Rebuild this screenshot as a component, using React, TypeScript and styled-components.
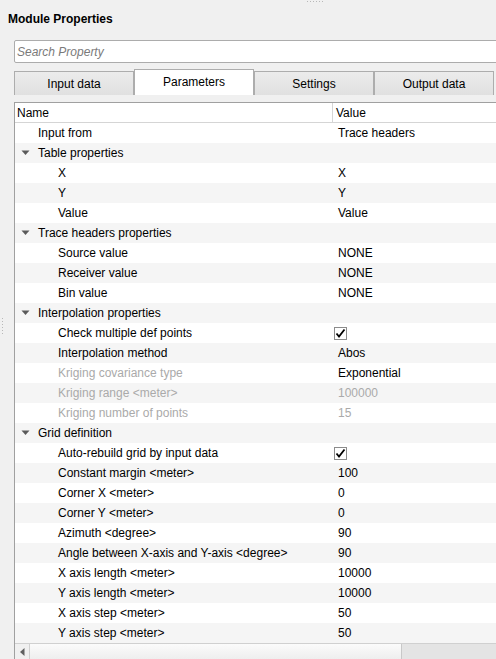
import React from 'react';
import styled, { createGlobalStyle } from 'styled-components';

const GlobalStyle = createGlobalStyle`
  html, body {
    margin: 0;
    padding: 0;
    background: #f0f0f0;
  }
  body {
    font-family: 'Liberation Sans', Arial, sans-serif;
    font-size: 12px;
    color: #000;
  }
`;

type Row = {
  label: string;
  value?: string;
  level: 1 | 2;
  group?: boolean;
  disabled?: boolean;
  valueDisabled?: boolean;
  check?: boolean;
};

const rows: Row[] = [
  { label: 'Input from', value: 'Trace headers', level: 1 },
  { label: 'Table properties', level: 1, group: true },
  { label: 'X', value: 'X', level: 2 },
  { label: 'Y', value: 'Y', level: 2 },
  { label: 'Value', value: 'Value', level: 2 },
  { label: 'Trace headers properties', level: 1, group: true },
  { label: 'Source value', value: 'NONE', level: 2 },
  { label: 'Receiver value', value: 'NONE', level: 2 },
  { label: 'Bin value', value: 'NONE', level: 2 },
  { label: 'Interpolation properties', level: 1, group: true },
  { label: 'Check multiple def points', level: 2, check: true },
  { label: 'Interpolation method', value: 'Abos', level: 2 },
  { label: 'Kriging covariance type', value: 'Exponential', level: 2, disabled: true },
  { label: 'Kriging range <meter>', value: '100000', level: 2, disabled: true, valueDisabled: true },
  { label: 'Kriging number of points', value: '15', level: 2, disabled: true, valueDisabled: true },
  { label: 'Grid definition', level: 1, group: true },
  { label: 'Auto-rebuild grid by input data', level: 2, check: true },
  { label: 'Constant margin <meter>', value: '100', level: 2 },
  { label: 'Corner X <meter>', value: '0', level: 2 },
  { label: 'Corner Y <meter>', value: '0', level: 2 },
  { label: 'Azimuth <degree>', value: '90', level: 2 },
  { label: 'Angle between X-axis and Y-axis <degree>', value: '90', level: 2 },
  { label: 'X axis length <meter>', value: '10000', level: 2 },
  { label: 'Y axis length <meter>', value: '10000', level: 2 },
  { label: 'X axis step <meter>', value: '50', level: 2 },
  { label: 'Y axis step <meter>', value: '50', level: 2 },
];

const tabs = ['Input data', 'Parameters', 'Settings', 'Output data'];

const Window = styled.div`
  position: relative;
  width: 496px;
  height: 659px;
  overflow: hidden;
  background: #f0f0f0;
`;

const TopGrip = styled.div`
  position: absolute;
  top: 1px;
  left: 307px;
  display: flex;
  gap: 2px;
`;

const SideGrip = styled.div`
  position: absolute;
  top: 318px;
  left: 2px;
  display: flex;
  flex-direction: column;
  gap: 2px;
`;

const Dot = styled.span`
  display: block;
  width: 1px;
  height: 1px;
  background: #b8b8b8;
`;

const Title = styled.div`
  padding: 12px 0 0 8px;
  height: 28px;
  box-sizing: border-box;
  font-weight: bold;
  font-size: 12px;
  line-height: 14px;
`;

const Body = styled.div`
  padding-left: 14px;
  width: 520px;
  box-sizing: border-box;
`;

const Search = styled.div`
  margin-top: 12px;
  height: 23px;
  box-sizing: border-box;
  background: #fff;
  border: 1px solid #acacac;
  border-radius: 2px;
  padding-left: 2px;
  display: flex;
  align-items: center;
  font-style: italic;
  color: #7a7a7a;
`;

const TabBar = styled.div`
  display: flex;
  align-items: flex-end;
  height: 26px;
  margin-top: 6px;
`;

const Tab = styled.div<{ active?: boolean }>`
  width: 120px;
  box-sizing: border-box;
  height: ${p => (p.active ? '26px' : '24px')};
  display: flex;
  align-items: center;
  justify-content: center;
  padding-bottom: ${p => (p.active ? '2px' : '0')};
  border: 1px solid #adadad;
  border-bottom: none;
  background: ${p => (p.active ? '#fff' : 'linear-gradient(#ececec, #e0e0e0)')};
`;

const Table = styled.div`
  margin-top: 7px;
  border: 1px solid #a0a0a0;
  border-right: none;
  background: #fff;
`;

const Header = styled.div`
  display: grid;
  grid-template-columns: 317px 1fr;
  height: 19px;
  border-bottom: 1px solid #d5d5d5;
  background: #fff;
`;

const HeaderCell = styled.div<{ divider?: boolean }>`
  padding-left: ${p => (p.divider ? '3px' : '2px')};
  border-left: ${p => (p.divider ? '1px solid #d5d5d5' : 'none')};
  display: flex;
  align-items: center;
`;

const PropRow = styled.div<{ odd: boolean }>`
  display: grid;
  grid-template-columns: 317px 1fr;
  height: 20px;
  background: ${p => (p.odd ? '#f5f5f5' : '#fff')};
`;

const NameCell = styled.div<{ level: number; disabled?: boolean }>`
  position: relative;
  display: flex;
  align-items: center;
  padding-left: ${p => (p.level === 1 ? '23px' : '43px')};
  color: ${p => (p.disabled ? '#aaaaaa' : '#000')};
  white-space: nowrap;
`;

const Arrow = styled.svg`
  position: absolute;
  left: 6px;
  top: 7px;
`;

const ValueCell = styled.div<{ disabled?: boolean }>`
  display: flex;
  align-items: center;
  padding-left: 6px;
  color: ${p => (p.disabled ? '#aaaaaa' : '#000')};
`;

const CheckBox = styled.div`
  width: 13px;
  height: 13px;
  box-sizing: border-box;
  border: 1px solid #8c8c8c;
  background: #fff;
  margin-left: -4px;
  display: flex;
  align-items: center;
  justify-content: center;
`;

const ScrollBar = styled.div`
  display: flex;
  height: 15px;
  border-top: 1px solid #d0d0d0;
  background: #e4e4e4;
`;

const ScrollButton = styled.div`
  width: 14px;
  border-right: 1px solid #d0d0d0;
  background: #f0f0f0;
  display: flex;
  align-items: center;
  justify-content: center;
`;

const Thumb = styled.div`
  width: 371px;
  border-right: 1px solid #c8c8c8;
  background: linear-gradient(#fbfbfb, #eeeeee);
`;

const dots = Array.from({ length: 6 });

export default function App() {
  return (
    <Window>
      <GlobalStyle />
      <TopGrip>
        {dots.map((_, i) => (
          <Dot key={i} />
        ))}
      </TopGrip>
      <SideGrip>
        {dots.map((_, i) => (
          <Dot key={i} />
        ))}
      </SideGrip>
      <Title>Module Properties</Title>
      <Body>
        <Search>Search Property</Search>
        <TabBar>
          {tabs.map(t => (
            <Tab key={t} active={t === 'Parameters'}>
              {t}
            </Tab>
          ))}
        </TabBar>
        <Table>
          <Header>
            <HeaderCell>Name</HeaderCell>
            <HeaderCell divider>Value</HeaderCell>
          </Header>
          {rows.map((r, i) => (
            <PropRow key={r.label} odd={i % 2 === 1}>
              <NameCell level={r.level} disabled={r.disabled}>
                {r.group && (
                  <Arrow width="9" height="6" viewBox="0 0 9 6">
                    <path d="M0.5 0.5 L8.5 0.5 L4.5 5 Z" fill="#5a5a5a" />
                  </Arrow>
                )}
                {r.label}
              </NameCell>
              <ValueCell disabled={r.valueDisabled}>
                {r.check ? (
                  <CheckBox>
                    <svg width="11" height="11" viewBox="0 0 11 11">
                      <path d="M1.5 5.5 L4 8.5 L9.5 1.5" stroke="#000" strokeWidth="1.8" fill="none" />
                    </svg>
                  </CheckBox>
                ) : (
                  r.value
                )}
              </ValueCell>
            </PropRow>
          ))}
          <ScrollBar>
            <ScrollButton>
              <svg width="5" height="8" viewBox="0 0 5 8">
                <path d="M4.5 0 L0 4 L4.5 8 Z" fill="#606060" />
              </svg>
            </ScrollButton>
            <Thumb />
          </ScrollBar>
        </Table>
      </Body>
    </Window>
  );
}
